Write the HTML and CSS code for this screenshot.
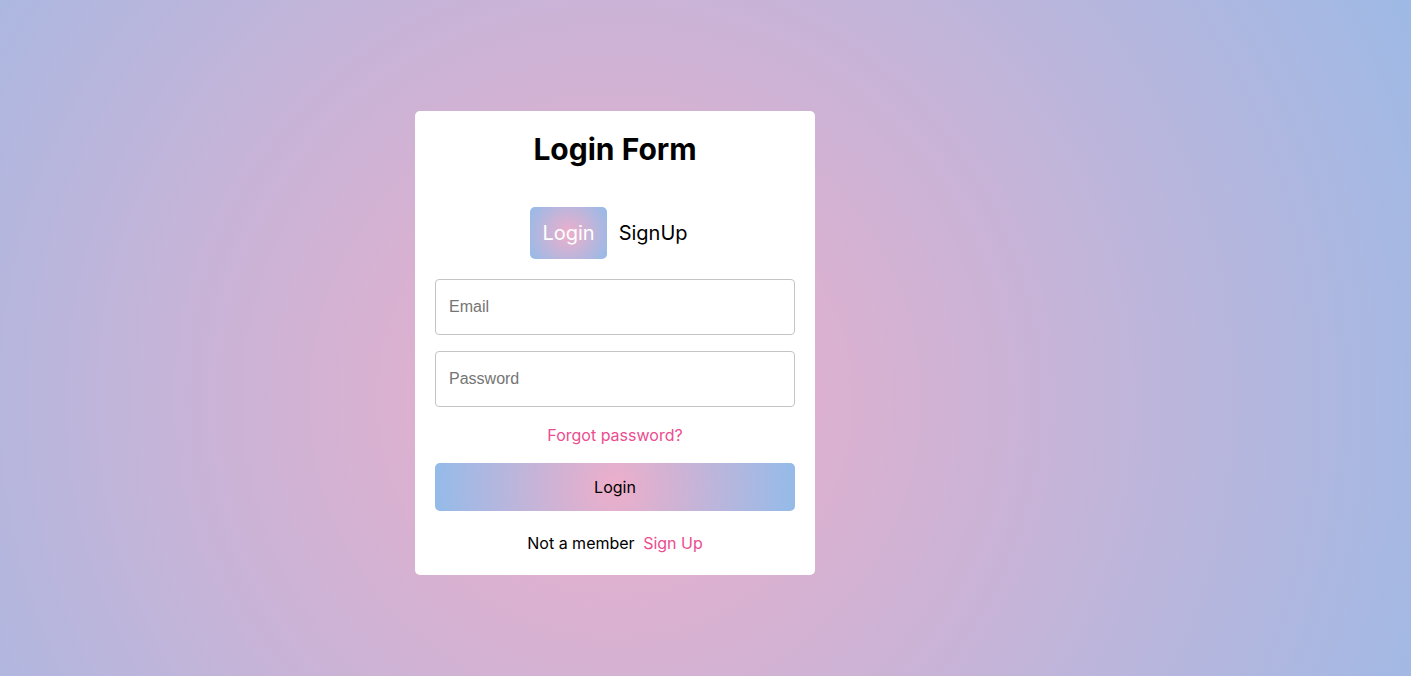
FILE: index.html
```html
<!DOCTYPE html>
<html lang="en">
<head>
<meta charset="utf-8">
<title>Login Form</title>
<link rel="stylesheet" href="styles.css">
</head>
<body>
<main class="page">
  <section class="card">
    <h1 class="title">Login Form</h1>
    <div class="tabs">
      <button class="tab tab-active" type="button">Login</button>
      <button class="tab" type="button">SignUp</button>
    </div>
    <form class="form">
      <input class="field" type="email" placeholder="Email">
      <input class="field" type="password" placeholder="Password">
      <a class="forgot" href="#">Forgot password?</a>
      <button class="submit" type="button">Login</button>
    </form>
    <p class="footer">Not a member <a class="link" href="#">Sign Up</a></p>
  </section>
</main>
</body>
</html>
```

FILE: styles.css
```css
* { box-sizing: border-box; }
html, body { margin: 0; padding: 0; height: 100%; }
body {
  font-family: Inter, "Noto Sans", sans-serif;
  background: radial-gradient(circle 1000px at 615px 400px, #eeaeca 0%, #94bbe9 100%);
  color: #000;
}
.page {
  min-height: 100vh;
  padding: 111px 0 0 415px;
}
.card {
  width: 400px;
  background: #fff;
  border-radius: 5px;
  padding: 20px;
  display: flex;
  flex-direction: column;
}
.title {
  margin: 0;
  font-size: 30px;
  line-height: 36px;
  font-weight: 700;
  text-align: center;
}
.tabs {
  margin-top: 40px;
  display: flex;
  justify-content: center;
}
.tab {
  font-family: Inter, "Noto Sans", sans-serif;
  font-size: 20px;
  line-height: 28px;
  padding: 12px 12px;
  border: none;
  border-radius: 5px;
  background: transparent;
  color: #000;
  cursor: pointer;
}
.tab-active {
  color: #fff;
  background: radial-gradient(circle, #eeaeca 0%, #94bbe9 100%);
}
.form {
  margin-top: 20px;
  display: flex;
  flex-direction: column;
  gap: 16px;
}
.field {
  height: 56px;
  width: 100%;
  border: 1px solid #c4c4c4;
  border-radius: 4px;
  padding: 0 13px;
  font-family: "Liberation Sans", Arial, sans-serif;
  font-size: 16px;
  color: #000;
  outline: none;
}
.field::placeholder { color: #757575; }
.forgot {
  align-self: center;
  font-size: 16px;
  line-height: 24px;
  color: #ec4d8f;
  text-decoration: none;
}
.submit {
  height: 48px;
  border: none;
  border-radius: 5px;
  background: radial-gradient(circle, #eeaeca 0%, #94bbe9 100%);
  font-family: Inter, "Noto Sans", sans-serif;
  font-size: 16px;
  color: #000;
  cursor: pointer;
}
.footer {
  margin: 20px 0 0;
  text-align: center;
  font-size: 16px;
  line-height: 24px;
}
.link {
  margin-left: 4px;
  color: #ec4d8f;
  text-decoration: none;
}
```
